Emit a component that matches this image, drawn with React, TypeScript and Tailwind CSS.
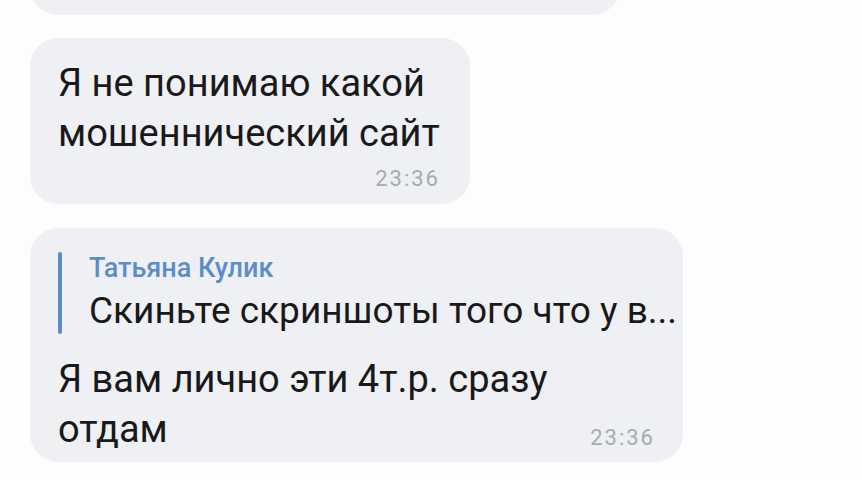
export default function App() {
  return (
    <div className="h-[480px] w-[862px] overflow-hidden bg-[#fdfdfd] font-['Roboto',sans-serif] text-[#19191b]">
      <div className="flex flex-col items-start pl-[30px]">
        <div className="-mt-[45px] h-[60px] w-[590px] rounded-[28px] bg-[#eef0f3]" />

        <div className="mt-[23px] w-[440px] rounded-[28px] bg-[#eef0f3] pb-[11px] pl-[28px] pr-[30px] pt-[20px]">
          <p className="text-[38px] leading-[50px]">
            Я не понимаю какой
            <br />
            мошеннический сайт
          </p>
          <p className="mt-[7px] text-right text-[22px] leading-[28px] tracking-[2px] text-[#a7abb0]">23:36</p>
        </div>

        <div className="mt-[24px] w-[653px] rounded-[28px] bg-[#eef0f3] pb-[8px] pl-[28px] pr-[28px] pt-[24px]">
          <div className="flex gap-[27px]">
            <div className="w-[4px] shrink-0 rounded-full bg-[#5b8dca]" />
            <div className="flex min-w-0 flex-col gap-[4px]">
              <span className="whitespace-nowrap text-[27px] font-medium leading-[32px] text-[#5b8dca]">Татьяна Кулик</span>
              <span className="whitespace-nowrap text-[37px] leading-[46px]">Скиньте скриншоты того что у в...</span>
            </div>
          </div>
          <div className="mt-[20px] flex items-end justify-between">
            <p className="text-[38px] leading-[50px]">
              Я вам лично эти 4т.р. сразу
              <br />
              отдам
            </p>
            <span className="mb-[2px] text-[22px] leading-[28px] tracking-[2px] text-[#a7abb0]">23:36</span>
          </div>
        </div>
      </div>
    </div>
  );
}
